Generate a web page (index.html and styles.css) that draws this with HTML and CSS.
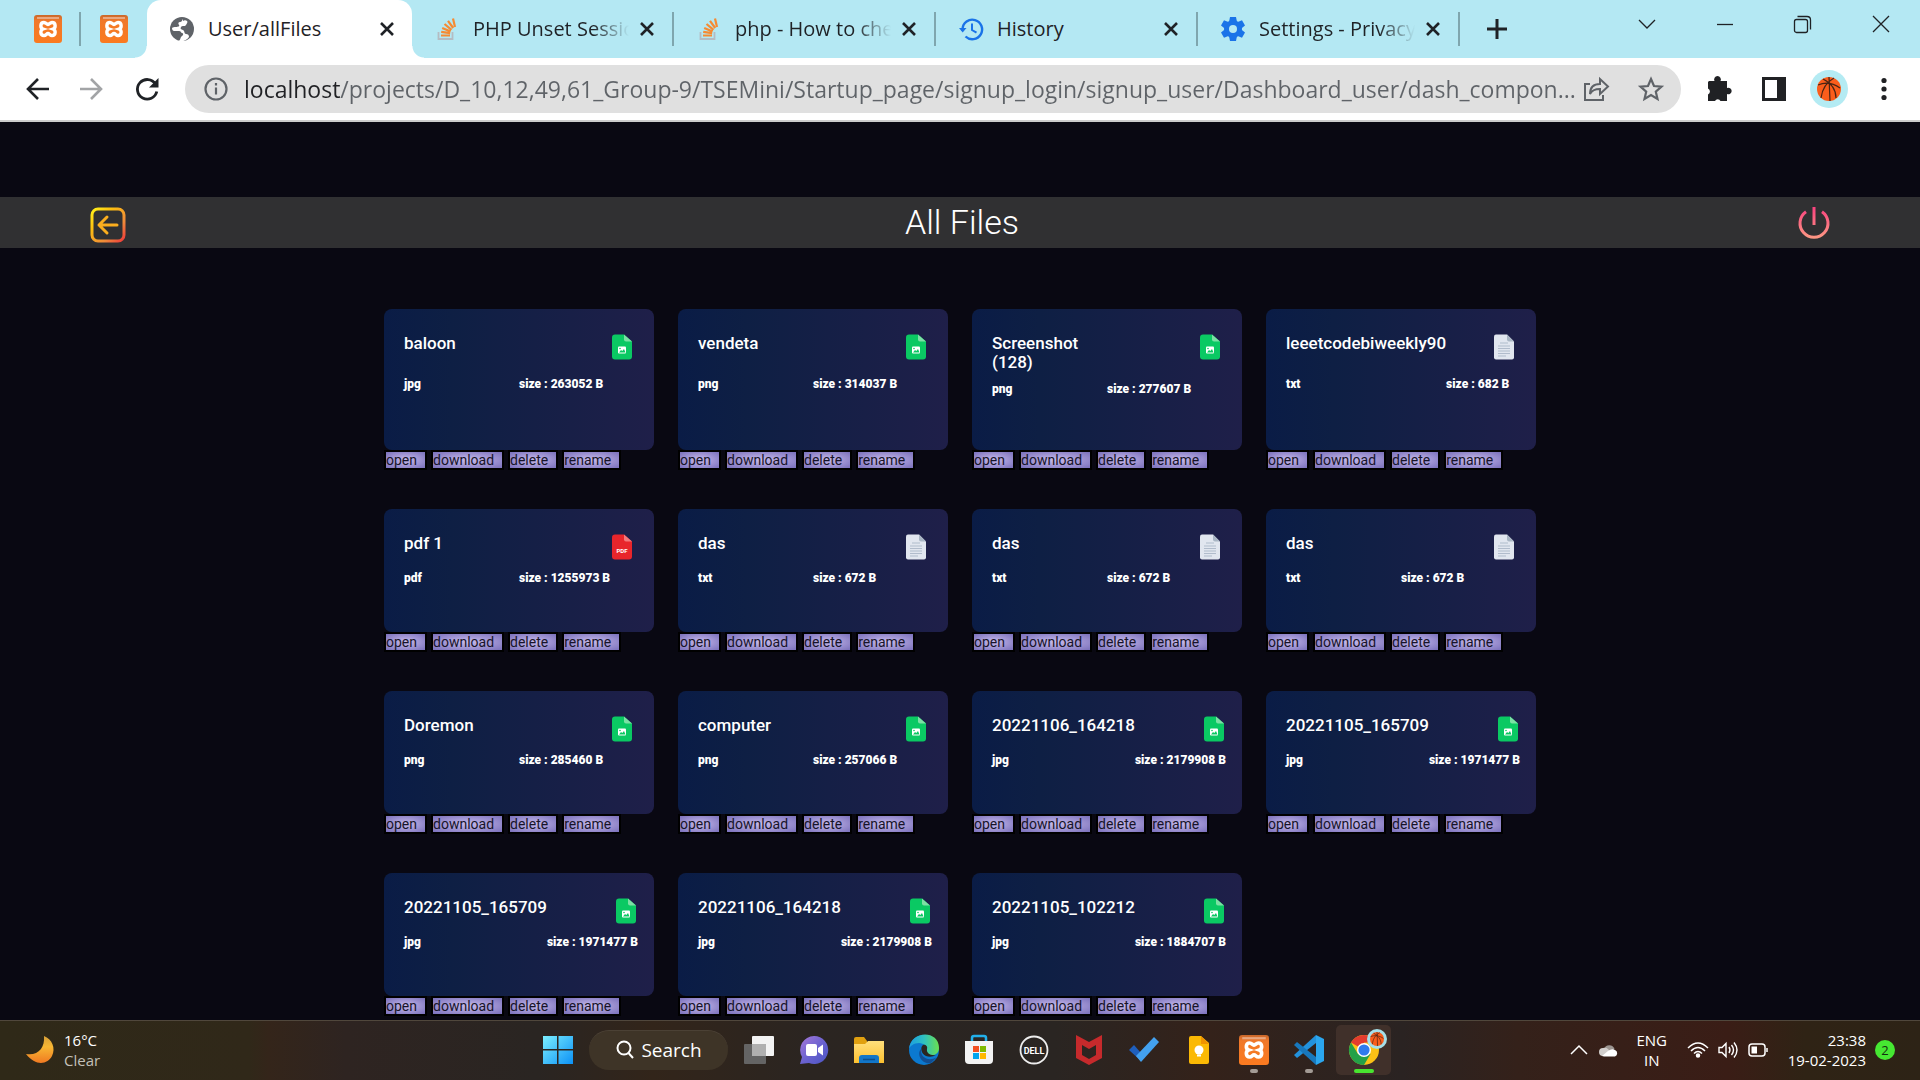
FILE: index.html
```html
<!DOCTYPE html>
<html lang="en">
<head>
<meta charset="utf-8">
<title>User/allFiles</title>
<link rel="stylesheet" href="styles.css">
</head>
<body>
<svg class="defs" aria-hidden="true">
  <defs>
    <linearGradient id="g-xampp" x1="0" y1="0" x2="0" y2="1"><stop offset="0" stop-color="#c9682c"/><stop offset=".2" stop-color="#f0782a"/><stop offset="1" stop-color="#fb7a20"/></linearGradient>
    <linearGradient id="g-back" x1="0" y1="0" x2="1" y2="1"><stop offset="0" stop-color="#fff11a"/><stop offset=".3" stop-color="#fdbf10"/><stop offset=".7" stop-color="#f08a3a"/><stop offset="1" stop-color="#ee3a3a"/></linearGradient>
    <linearGradient id="g-power" gradientUnits="userSpaceOnUse" x1="0" y1="0" x2="0" y2="32"><stop offset="0" stop-color="#f9417f"/><stop offset="1" stop-color="#fd9a84"/></linearGradient>
    <linearGradient id="g-moon" x1="0" y1="0" x2="0" y2="1"><stop offset="0" stop-color="#d8a038"/><stop offset=".4" stop-color="#f7b733"/><stop offset="1" stop-color="#f07a22"/></linearGradient>
    <linearGradient id="g-win" gradientUnits="userSpaceOnUse" x1="0" y1="0" x2="30" y2="30"><stop offset="0" stop-color="#7df0ff"/><stop offset="1" stop-color="#0a8ff5"/></linearGradient>
    <linearGradient id="g-chat" x1="0" y1="0" x2="1" y2="1"><stop offset="0" stop-color="#a878d8"/><stop offset=".5" stop-color="#6c63d0"/><stop offset="1" stop-color="#4a54c4"/></linearGradient>
    <linearGradient id="g-folder" x1="0" y1="0" x2="0" y2="1"><stop offset="0" stop-color="#ffdf7c"/><stop offset="1" stop-color="#fdc130"/></linearGradient>
    <linearGradient id="g-edge" x1="0" y1="0" x2="1" y2="0"><stop offset="0" stop-color="#1b9de2"/><stop offset=".5" stop-color="#2fc1c0"/><stop offset="1" stop-color="#6be04f"/></linearGradient>
    <symbol id="i-xampp" viewBox="0 0 28 28"><rect width="28" height="28" rx="3" fill="url(#g-xampp)"/><path d="M3 3h22" stroke="#e9a881" stroke-width="2"/><path d="M10 7.500c-4 0-4 5.500-1 6.500c-3 1-3 6.500 1 6.500c2 0 2.500-2 4-2s2 2 4 2c4 0 4-5.500 1-6.500c3-1 3-6.500-1-6.500c-2 0-2.500 2-4 2s-2-2-4-2z" fill="#f57a25" stroke="#fff" stroke-width="3.400"/></symbol>
    <symbol id="i-so" viewBox="0 0 24 24"><path d="M3.500 15v7h14v-7" fill="none" stroke="#b4bcc2" stroke-width="1.800"/><g stroke="#f58b33" stroke-width="2.200"><path d="M6 18.500h9M6.200 14.800l9 1.300M7.200 11l8.400 3.600M9.500 7l7 5.800M13 3.800l5.200 7.200M18 1.500l2 8.500"/></g></symbol>
    <symbol id="i-x" viewBox="0 0 20 20"><path d="M4 4l12 12M16 4L4 16" stroke="#1f2226" stroke-width="2.600"/></symbol>
    <symbol id="i-img" viewBox="0 0 20 25"><path d="M3 0h9l8 7v15a3 3 0 0 1-3 3H3a3 3 0 0 1-3-3V3a3 3 0 0 1 3-3z" fill="#0ac963"/><path d="M12 0l8 7h-6a2 2 0 0 1-2-2z" fill="#7ce0a4"/><rect x="6" y="12" width="8" height="7" rx="1" fill="#fff"/><path d="M7 18l2-2.500 1.300 1 1.700-2 1.500 3.500z" fill="#0ac963"/><circle cx="8" cy="14" r=".8" fill="#0ac963"/></symbol>
    <symbol id="i-pdf" viewBox="0 0 20 25"><path d="M3 0h9l8 7v15a3 3 0 0 1-3 3H3a3 3 0 0 1-3-3V3a3 3 0 0 1 3-3z" fill="#e8252b"/><path d="M12 0l8 7h-6a2 2 0 0 1-2-2z" fill="#f2797c"/><text x="10" y="18.500" font-size="6" text-anchor="middle" class="glyph-text">PDF</text></symbol>
    <symbol id="i-txt" viewBox="0 0 20 25"><path d="M2 0h11l7 7v16a2 2 0 0 1-2 2H2a2 2 0 0 1-2-2V2a2 2 0 0 1 2-2z" fill="#e1e6ef"/><path d="M13 0l7 7h-5a2 2 0 0 1-2-2z" fill="#a9b6c4"/><path d="M6 8.500h8M4 11.500h12M4 14h12M4 16.500h12M4 19h12M4 21.500h8" stroke="#b0bbcb" stroke-width="1.200"/></symbol>
    <symbol id="i-ball" viewBox="0 0 24 24"><circle cx="12" cy="12" r="12" fill="#fb5d1b"/><path d="M12 0l1 24M1 8c7-3 15-2 22 3M4 21C5 13 8 6 17 1M6 2c8 4 13 11 13 19" fill="none" stroke="#4a2414" stroke-width="1.200"/></symbol>
  </defs>
</svg>

<header class="browser">
  <nav class="tabs" aria-label="Tabs">
    <a class="tab-pin" href="#" aria-label="XAMPP"><svg class="ic28"><use href="#i-xampp"/></svg></a>
    <a class="tab-pin tab-pin-last" href="#" aria-label="XAMPP"><svg class="ic28"><use href="#i-xampp"/></svg></a>
    <div class="tab tab-active">
      <svg class="ic24" viewBox="0 0 24 24"><circle cx="12" cy="12" r="12" fill="#5f6368"/><path d="M13 2c-1 1-1 3-3 3s-2 2-1 3-1 2-3 2-3 0-4 1c0 2 1 3 2 3h5c2 0 2 2 3 2s2 2 0 3-1 3-3 5c4 1 8-1 10-4 0-2-1-3-3-3s-1-3-3-4-3-1-2-3 4 0 5-2 2-3 1-4-3-1-4 0z" fill="#fff"/></svg>
      <a class="tab-name" href="#">User/allFiles</a><button class="tab-close" aria-label="Close"><svg class="ic20"><use href="#i-x"/></svg></button>
    </div>
    <div class="tab">
      <svg class="ic24"><use href="#i-so"/></svg>
      <a class="tab-name tab-fade" href="#">PHP Unset Session</a><button class="tab-close" aria-label="Close"><svg class="ic20"><use href="#i-x"/></svg></button>
    </div>
    <div class="tab">
      <svg class="ic24"><use href="#i-so"/></svg>
      <a class="tab-name tab-fade" href="#">php - How to check</a><button class="tab-close" aria-label="Close"><svg class="ic20"><use href="#i-x"/></svg></button>
    </div>
    <div class="tab">
      <svg class="ic24" viewBox="0 0 24 24" fill="none" stroke="#1a73e8" stroke-width="2.400"><path d="M3.500 14V12A9.800 9.800 0 1 1 6.500 19.500"/><path d="M0 11h7.500l-3.800 4.500z" fill="#1a73e8" stroke="none"/><path d="M13 6.500v6.500l4.500 2.700" stroke-width="2"/></svg>
      <a class="tab-name" href="#">History</a><button class="tab-close" aria-label="Close"><svg class="ic20"><use href="#i-x"/></svg></button>
    </div>
    <div class="tab">
      <svg class="ic24" viewBox="0 0 24 24"><g fill="#1a73e8"><circle cx="12" cy="12" r="9"/><path d="M9 0h6l1 5H8zM9 24h6l1-5H8zM0 8.500L3 3.300l5 2-4 6.500zM24 8.500l-3-5.200-5 2 4 6.500zM0 15.500l3 5.200 5-2-4-6.500zM24 15.500l-3 5.200-5-2 4-6.500z"/></g><circle cx="12" cy="12" r="4" fill="#b5e8f3"/></svg>
      <a class="tab-name tab-fade" href="#">Settings - Privacy and</a><button class="tab-close" aria-label="Close"><svg class="ic20"><use href="#i-x"/></svg></button>
    </div>
    <button class="tab-new" aria-label="New tab"><svg class="ic24" viewBox="0 0 24 24"><path d="M12 2v20M2 12h20" stroke="#1f2226" stroke-width="3"/></svg></button>
    <div class="window-controls">
      <button aria-label="Search tabs"><svg class="ic20" viewBox="0 0 20 20"><path d="M2 6l8 8 8-8"/></svg></button>
      <button aria-label="Minimize"><svg class="ic20" viewBox="0 0 20 20"><path d="M2 10.500h16"/></svg></button>
      <button aria-label="Restore"><svg class="ic20" viewBox="0 0 20 20"><rect x="1.500" y="5.500" width="13" height="13" rx="2"/><path d="M4.500 2.500H14q3.500 0 3.500 3.500v9.500"/></svg></button>
      <button aria-label="Close window"><svg class="ic20" viewBox="0 0 20 20"><path d="M2 2l16 16M18 2L2 18"/></svg></button>
    </div>
  </nav>
  <div class="toolbar">
    <button class="tool" aria-label="Back"><svg class="ic24" viewBox="0 0 24 24" fill="none" stroke="#1f2226" stroke-width="2.600"><path d="M24 12H3M13 2L3 12l10 10"/></svg></button>
    <button class="tool" aria-label="Forward"><svg class="ic24" viewBox="0 0 24 24" fill="none" stroke="#a2a4a6" stroke-width="2.600"><path d="M0 12h21M11 2l10 10-10 10"/></svg></button>
    <button class="tool" aria-label="Reload"><svg class="ic24" viewBox="0 0 24 24"><path d="M20.500 7A9.800 9.800 0 1 0 21.800 14.500" fill="none" stroke="#1f2226" stroke-width="2.800"/><path d="M23.500 1v9.500H14z" fill="#1f2226"/></svg></button>
    <div class="omnibox">
      <svg class="ic24" viewBox="0 0 24 24" fill="none" stroke="#5f6368" stroke-width="2.200"><circle cx="12" cy="12" r="10.500"/><path d="M12 10.500v7M12 6v2.600"/></svg>
      <input class="url" type="text" aria-label="Address" value="localhost/projects/D_10,12,49,61_Group-9/TSEMini/Startup_page/signup_login/signup_user/Dashboard_user/dash_compon...">
      <button class="omni-btn" aria-label="Share"><svg class="ic26" viewBox="0 0 26 26" fill="none" stroke="#5f6368" stroke-width="2"><path d="M7 8H2v16h18v-5"/><path d="M7 18c0-7 4-10 10-10V3l8 7.500-8 7.500v-5c-5 0-8 1-10 5z"/></svg></button>
      <button class="omni-btn omni-star" aria-label="Bookmark"><svg class="ic26" viewBox="0 0 26 26" fill="none" stroke="#5f6368" stroke-width="2.200"><path d="M13 3l3 7 7.500.7-5.700 5 1.700 7.300-6.500-3.900L6.500 23l1.700-7.300-5.700-5L10 10z"/></svg></button>
    </div>
    <button class="tool" aria-label="Extensions"><svg class="ic26" viewBox="0 0 26 26" fill="#202124"><path d="M3 5h5.500a3.400 3.400 0 1 1 6 0H21v7a3.300 3.300 0 1 1 0 6v7h-6.500a3 3 0 0 0-5.500 0H2v-6.500a3.300 3.300 0 0 0 0-6V6z"/></svg></button>
    <button class="tool" aria-label="Side panel"><svg class="ic24" viewBox="0 0 24 24"><path d="M1.500 1.500h21v21h-21z" fill="#fff" stroke="#202124" stroke-width="3"/><path d="M15 1h8v22h-8z" fill="#202124"/></svg></button>
    <button class="tool" aria-label="Profile"><span class="avatar"><svg class="ic24"><use href="#i-ball"/></svg></span></button>
    <button class="tool" aria-label="Menu"><svg class="ic24" viewBox="0 0 24 24" fill="#202124"><circle cx="12" cy="3.500" r="2.600"/><circle cx="12" cy="12" r="2.600"/><circle cx="12" cy="20.500" r="2.600"/></svg></button>
  </div>
</header>

<main class="page">
  <div class="page-bar">
    <a class="bar-back" href="#" aria-label="Back"><svg class="ic36" viewBox="0 0 36 36" fill="none" stroke="url(#g-back)" stroke-width="3"><rect x="2" y="2" width="32" height="32" rx="6"/><path d="M27 18H9M17 10l-8 8 8 8" stroke="#fbae1e" stroke-linecap="round" stroke-linejoin="round"/></svg></a>
    <h1>All Files</h1>
    <a href="#" aria-label="Log out"><svg class="ic32" viewBox="0 0 32 32" fill="none" stroke="url(#g-power)" stroke-width="3"><path d="M16 0l.01 18M8 4.800a14 14 0 1 0 16 0"/></svg></a>
  </div>

  <section class="files">
    <article class="file file-tall"><div class="card"><h2 class="name">baloon</h2><svg class="kind"><use href="#i-img"/></svg><span>jpg</span><span>size : 263052 B</span></div><div class="actions"><a href="#">open</a><a href="#">download</a><a href="#">delete</a><a href="#">rename</a></div></article>
    <article class="file file-tall"><div class="card"><h2 class="name">vendeta</h2><svg class="kind"><use href="#i-img"/></svg><span>png</span><span>size : 314037 B</span></div><div class="actions"><a href="#">open</a><a href="#">download</a><a href="#">delete</a><a href="#">rename</a></div></article>
    <article class="file file-tall"><div class="card"><h2 class="name">Screenshot (128)</h2><svg class="kind"><use href="#i-img"/></svg><span>png</span><span>size : 277607 B</span></div><div class="actions"><a href="#">open</a><a href="#">download</a><a href="#">delete</a><a href="#">rename</a></div></article>
    <article class="file file-tall"><div class="card"><h2 class="name">leeetcodebiweekly90</h2><svg class="kind"><use href="#i-txt"/></svg><span>txt</span><span>size : 682 B</span></div><div class="actions"><a href="#">open</a><a href="#">download</a><a href="#">delete</a><a href="#">rename</a></div></article>
    <article class="file"><div class="card"><h2 class="name">pdf 1</h2><svg class="kind"><use href="#i-pdf"/></svg><span>pdf</span><span>size : 1255973 B</span></div><div class="actions"><a href="#">open</a><a href="#">download</a><a href="#">delete</a><a href="#">rename</a></div></article>
    <article class="file"><div class="card"><h2 class="name">das</h2><svg class="kind"><use href="#i-txt"/></svg><span>txt</span><span>size : 672 B</span></div><div class="actions"><a href="#">open</a><a href="#">download</a><a href="#">delete</a><a href="#">rename</a></div></article>
    <article class="file"><div class="card"><h2 class="name">das</h2><svg class="kind"><use href="#i-txt"/></svg><span>txt</span><span>size : 672 B</span></div><div class="actions"><a href="#">open</a><a href="#">download</a><a href="#">delete</a><a href="#">rename</a></div></article>
    <article class="file"><div class="card"><h2 class="name">das</h2><svg class="kind"><use href="#i-txt"/></svg><span>txt</span><span>size : 672 B</span></div><div class="actions"><a href="#">open</a><a href="#">download</a><a href="#">delete</a><a href="#">rename</a></div></article>
    <article class="file"><div class="card"><h2 class="name">Doremon</h2><svg class="kind"><use href="#i-img"/></svg><span>png</span><span>size : 285460 B</span></div><div class="actions"><a href="#">open</a><a href="#">download</a><a href="#">delete</a><a href="#">rename</a></div></article>
    <article class="file"><div class="card"><h2 class="name">computer</h2><svg class="kind"><use href="#i-img"/></svg><span>png</span><span>size : 257066 B</span></div><div class="actions"><a href="#">open</a><a href="#">download</a><a href="#">delete</a><a href="#">rename</a></div></article>
    <article class="file"><div class="card"><h2 class="name">20221106_164218</h2><svg class="kind"><use href="#i-img"/></svg><span>jpg</span><span>size : 2179908 B</span></div><div class="actions"><a href="#">open</a><a href="#">download</a><a href="#">delete</a><a href="#">rename</a></div></article>
    <article class="file"><div class="card"><h2 class="name">20221105_165709</h2><svg class="kind"><use href="#i-img"/></svg><span>jpg</span><span>size : 1971477 B</span></div><div class="actions"><a href="#">open</a><a href="#">download</a><a href="#">delete</a><a href="#">rename</a></div></article>
    <article class="file"><div class="card"><h2 class="name">20221105_165709</h2><svg class="kind"><use href="#i-img"/></svg><span>jpg</span><span>size : 1971477 B</span></div><div class="actions"><a href="#">open</a><a href="#">download</a><a href="#">delete</a><a href="#">rename</a></div></article>
    <article class="file"><div class="card"><h2 class="name">20221106_164218</h2><svg class="kind"><use href="#i-img"/></svg><span>jpg</span><span>size : 2179908 B</span></div><div class="actions"><a href="#">open</a><a href="#">download</a><a href="#">delete</a><a href="#">rename</a></div></article>
    <article class="file"><div class="card"><h2 class="name">20221105_102212</h2><svg class="kind"><use href="#i-img"/></svg><span>jpg</span><span>size : 1884707 B</span></div><div class="actions"><a href="#">open</a><a href="#">download</a><a href="#">delete</a><a href="#">rename</a></div></article>
  </section>
</main>

<footer class="taskbar">
  <div class="weather">
    <svg class="ic28" viewBox="0 0 28 28"><path d="M18 0C26 3 30 12 26 20S10 31 0 18c12 2 19-6 18-18z" fill="url(#g-moon)"/></svg>
    <p>16°C<br><span class="muted">Clear</span></p>
  </div>
  <div class="apps">
    <button class="app" aria-label="Start"><svg class="ic30" viewBox="0 0 30 30" fill="url(#g-win)"><path d="M0 1h14v13H0zM15.500 1H30v13H15.500zM0 15.500h14V29H0zM15.500 15.500H30V29H15.500z"/></svg></button>
    <button class="search"><svg class="ic20" viewBox="0 0 20 20" fill="none" stroke="#fff" stroke-width="2"><circle cx="9" cy="8" r="6.500"/><path d="M13.500 13l4.500 5"/></svg>Search</button>
    <button class="app" aria-label="Task view"><svg class="ic30" viewBox="0 0 30 30"><rect y="9" width="22" height="20" rx="1" fill="#646464"/><rect x="8" y="1" width="22" height="20" rx="1" fill="#f3f3f3"/><path d="M8 9h14v12H8z" fill="#b0b0b0"/></svg></button>
    <button class="app" aria-label="Chat"><svg class="ic30" viewBox="0 0 30 30"><path d="M15 1a14 14 0 1 1-5 27L1 29l2-7A14 14 0 0 1 15 1z" fill="url(#g-chat)"/><rect x="7" y="9" width="11" height="12" rx="2" fill="#fff"/><path d="M19 13l5-3.500v11L19 17z" fill="#fff"/></svg></button>
    <button class="app" aria-label="File Explorer"><svg class="ic30" viewBox="0 0 30 30"><path d="M0 4a2 2 0 0 1 2-2h8l3 4v6H0z" fill="#e0a010"/><path d="M0 9h11l3-3h16v22H0z" fill="url(#g-folder)"/><path d="M5 28v-5a3 3 0 0 1 3-3h14a3 3 0 0 1 3 3v5z" fill="#1276c8"/><path d="M9 24.500h12" stroke="#0b4f8e" stroke-width="1.500"/></svg></button>
    <button class="app" aria-label="Edge"><svg class="ic30" viewBox="0 0 30 30"><circle cx="15" cy="15" r="15" fill="#0b79cf"/><path d="M0 14C2-5 30-5 30 13c0 5-4 8-9 7s-3-4-3-6-3-6-8-6-9 3-10 6z" fill="url(#g-edge)"/><path d="M12 14c-5 5 1 16 10 14l6-6c-8 5-17 1-16-8z" fill="#124e93"/><path d="M18 14c1-3-2-5-4-4-3 2-2 9 3 11 3 1 7 1 10-1-5 1-10-2-9-6z" fill="#2b2521"/></svg></button>
    <button class="app" aria-label="Store"><svg class="ic30" viewBox="0 0 30 30"><path d="M8 8V3q0-2 2-2h10q2 0 2 2v5" fill="none" stroke="#22b0ea" stroke-width="2.500"/><path d="M1 6h28v19a4 4 0 0 1-4 4H5a4 4 0 0 1-4-4z" fill="#f3f3f3"/><path d="M9 11h6v6H9z" fill="#f25022"/><path d="M16 11h6v6h-6z" fill="#7fba00"/><path d="M9 18h6v6H9z" fill="#00a4ef"/><path d="M16 18h6v6h-6z" fill="#ffb900"/></svg></button>
    <button class="app" aria-label="Dell"><svg class="ic30" viewBox="0 0 30 30"><circle cx="15" cy="15" r="13.500" fill="none" stroke="#eee" stroke-width="1.800"/><text x="15" y="18.500" font-size="9" text-anchor="middle" class="glyph-text">DELL</text></svg></button>
    <button class="app" aria-label="McAfee"><svg class="ic30" viewBox="0 0 30 30"><path d="M2 0l13 7 13-7v23l-13 7-13-7zM8 10v10l7 4 7-4V10l-7 4z" fill="#c62a2c" fill-rule="evenodd"/></svg></button>
    <button class="app" aria-label="To Do"><svg class="ic30" viewBox="0 0 30 30"><path d="M0 15l5-5 7 8v8z" fill="#1f5fbd"/><path d="M7 21L25 2l5 5-18 20z" fill="#43a1ef"/></svg></button>
    <button class="app" aria-label="Keep"><svg class="ic30" viewBox="0 0 30 30"><path d="M7 1h10l8 7v19a2 2 0 0 1-2 2H7a2 2 0 0 1-2-2V3a2 2 0 0 1 2-2z" fill="#fbb904"/><path d="M17 1l8 8h-8z" fill="#f09300"/><circle cx="15" cy="15" r="4.500" fill="#fff"/><path d="M13 20.500h4" stroke="#fff" stroke-width="2"/></svg></button>
    <button class="app app-open" aria-label="XAMPP"><svg class="ic30"><use href="#i-xampp"/></svg></button>
    <button class="app app-open" aria-label="Visual Studio Code"><svg class="ic30" viewBox="0 0 30 30"><path d="M22 8L3 23l-3-3 22-20z" fill="#2392dc"/><path d="M22 22L3 7l-3 3 22 20z" fill="#1878bd"/><path d="M22 0l8 4v22l-8 4z" fill="#2ba6ee"/></svg></button>
    <button class="app app-open app-current" aria-label="Chrome"><svg class="ic30" viewBox="0 0 30 30"><circle cx="15" cy="15" r="15" fill="#fbc116"/><path d="M15 15L2 7.500A15 15 0 0 1 28 7.500H15z" fill="#e33b2e"/><path d="M2 7.500A15 15 0 0 0 15 30l6.500-11L9 19z" fill="#24a148"/><circle cx="15" cy="15" r="7" fill="#fff"/><circle cx="15" cy="15" r="5.600" fill="#2f7bee"/></svg><span class="profile-badge"><svg class="ic14"><use href="#i-ball"/></svg></span></button>
  </div>
  <div class="tray">
    <svg class="ic16" viewBox="0 0 16 16" fill="none" stroke="#fff" stroke-width="1.500"><path d="M0 12l8-8 8 8"/></svg>
    <svg class="ic20" viewBox="0 0 20 20"><path d="M5 9a5.500 5.500 0 0 1 10.500 0L10 14z" fill="#9c9692"/><path d="M4 16a4 4 0 0 1 0-8q3-1 5 1l6 7z" fill="#d2cfcd"/><path d="M3 16l6-5q4-3 7-1a3.500 3.500 0 0 1 0 6.500H5z" fill="#fff"/></svg>
    <p class="lang">ENG<br>IN</p>
    <div class="status">
      <svg class="ic20" viewBox="0 0 20 20" fill="none" stroke="#fff" stroke-width="1.500"><path d="M0 8q10-10 20 0M3 11q7-7 14 0M6 13.500q4-4 8 0"/><circle cx="10" cy="15.500" r="1.500" fill="#fff"/></svg>
      <svg class="ic20" viewBox="0 0 20 20" fill="none" stroke="#fff" stroke-width="1.400"><path d="M1 7.500h3l4-4v13l-4-4H1zM11 7q2 3 0 6M13.500 5q4 5 0 10M16 2.500q6 7.500 0 15"/></svg>
      <svg class="ic20" viewBox="0 0 20 20" fill="none" stroke="#fff" stroke-width="1.500"><rect x="1" y="4" width="16" height="12" rx="3"/><path d="M19 8v4"/><path d="M3.500 6.500H9v7H3.500z" fill="#fff" stroke="none"/></svg>
    </div>
    <p class="clock">23:38<br>19-02-2023</p>
    <span class="count">2</span>
  </div>
</footer>
</body>
</html>
```
FILE: styles.css
```css
* { box-sizing: border-box; margin: 0; }
body { display: flex; flex-direction: column; height: 100vh; background: #090812; font-family: "Open Sans", "Noto Sans", sans-serif; }
a { color: inherit; text-decoration: none; }
button { padding: 0; border: 0; background: none; color: inherit; font: inherit; display: flex; align-items: center; justify-content: center; }
svg { display: block; flex: none; overflow: visible; }
.defs { position: absolute; width: 0; height: 0; }
.glyph-text { font-family: Roboto, sans-serif; font-weight: 700; fill: #fff; }
.ic14 { width: 14px; height: 14px; }
.ic16 { width: 16px; height: 16px; }
.ic20 { width: 20px; height: 20px; }
.ic24 { width: 24px; height: 24px; }
.ic26 { width: 26px; height: 26px; }
.ic28 { width: 28px; height: 28px; }
.ic30 { width: 30px; height: 30px; }
.ic32 { width: 32px; height: 32px; }
.ic36 { width: 36px; height: 36px; }

/* browser chrome */
.browser { flex: none; background: #fff; border-bottom: 2px solid #ccc; }
.tabs { display: flex; align-items: center; height: 58px; padding-left: 16px; background: #b4e8f3; color: #1f2226; }
.tab-pin { display: flex; align-items: center; justify-content: center; width: 65px; height: 34px; border-right: 2px solid #7fa6ae; }
.tab-pin-last { border-right: 0; width: 66px; }
.tab { display: flex; align-items: center; width: 262px; height: 34px; padding: 0 15px 0 23px; border-right: 2px solid #7fa6ae; }
.tab-active { position: relative; width: 265px; height: 58px; border: 0; background: #fff; border-radius: 14px 14px 0 0; }
.tab-active::before, .tab-active::after { content: ""; position: absolute; bottom: 0; width: 12px; height: 12px; }
.tab-active::before { right: 100%; background: radial-gradient(circle at 0 0, #b4e8f3 11px, #fff 12px); }
.tab-active::after { left: 100%; background: radial-gradient(circle at 100% 0, #b4e8f3 11px, #fff 12px); }
.tab-name { flex: 1; min-width: 0; margin: 0 8px 0 14px; overflow: hidden; white-space: nowrap; font-size: 20px; line-height: 32px; }
.tab-fade { mask-image: linear-gradient(to left, transparent, #000 36px); }
.tab-close { width: 20px; height: 20px; }
.tab-new { width: 74px; height: 34px; }
.window-controls { display: flex; margin-left: auto; align-self: stretch; padding-bottom: 10px; }
.window-controls button { width: 78px; }
.window-controls svg { fill: none; stroke: #1f2226; stroke-width: 1.3; }
.toolbar { display: flex; align-items: center; height: 62px; padding: 0 9px; }
.tool { flex: none; width: 55px; height: 48px; }
.omnibox { display: flex; flex: 1; align-items: center; height: 48px; margin: 0 10px 0 11px; padding: 0 10px 0 19px; border-radius: 24px; background: #e0e0e0; }
.url { flex: 1; min-width: 0; height: 40px; margin-left: 16px; padding: 0; border: 0; outline: 0; font-family: inherit; font-size: 23px; color: transparent; background: linear-gradient(to right, #202124 96px, #5f6368 96px); -webkit-background-clip: text; background-clip: text; }
.omni-btn { width: 40px; height: 48px; }
.omni-star { margin-left: 15px; }
.avatar { display: flex; align-items: center; justify-content: center; width: 38px; height: 38px; border-radius: 50%; background: #b4ebf3; }

/* file page */
.page { flex: 1; min-height: 0; overflow: auto; scrollbar-width: none; padding-top: 75px; font-family: Roboto, sans-serif; color: #fff; }
.page-bar { display: flex; align-items: center; justify-content: space-between; height: 51px; padding: 0 90px; background: #303032; }
.bar-back { padding-top: 4px; }
h1 { font-size: 34px; font-weight: 300; line-height: 51px; }
.files { display: grid; grid-template-columns: repeat(4, minmax(0, 1fr)); gap: 39px 24px; width: 60%; margin: 61px auto 0; }
.card { display: grid; grid-template-columns: 1fr 1fr; grid-template-rows: auto 14px; align-content: start; height: 123px; padding: 25px 20px 0; border-radius: 8px; background: linear-gradient(to right, #0a1c46, #0e1f44 25%, #1f1f49); font-size: 12px; font-weight: 900; line-height: 14px; }
.card span { white-space: nowrap; }
.name { min-height: 37px; padding-bottom: 10px; font-size: 17px; font-weight: 500; line-height: 19px; }
.file-tall .card { height: 141px; }
.file-tall .name { min-height: 43px; }
.kind { width: 20px; height: 26px; margin-right: 2px; justify-self: end; }
.actions { display: flex; gap: 4px; height: 20px; color: #17142a; font-size: 14px; line-height: 16px; }
.actions a { padding-right: 8px; border: 2px solid #000; background: radial-gradient(#c8bbec, #7a70bb); }

/* taskbar */
.taskbar { display: flex; flex: none; align-items: center; height: 60px; padding-bottom: 2px; border-top: 1px solid #50473c; background: linear-gradient(to right, #2f2918, #302819 13%, #34251a 14%, #2e2421 18%, #2a2522 28%, #32251a 34%, #2b2521 42%, #2a2522 55%, #34221a 63%, #2a2322 73%, #34211a 79%, #3a1d16 90%, #2f2315 94%, #2d2316); color: #fff; font-size: 15px; line-height: 20px; }
.weather { display: flex; flex: 1; gap: 10px; align-items: center; padding-left: 26px; }
.muted { color: #c4c0b8; }
.apps { display: flex; align-items: center; }
.app { position: relative; width: 55px; height: 50px; }
.search { gap: 6px; width: 139px; height: 40px; margin: 0 3px 0 4px; border-radius: 20px; background: #3e3427; border-top: 1px solid #4b4135; font-size: 19px; }
.app-open::after { content: ""; position: absolute; bottom: 2px; left: 24px; width: 8px; height: 4px; border-radius: 2px; background: #a39b95; }
.app-current { border-radius: 5px; background: #40302a; }
.app-current::after { left: 18px; width: 20px; background: #48e430; }
.profile-badge { position: absolute; top: 4px; right: 4px; padding: 3px; border-radius: 50%; background: #a5dfe8; }
.tray { display: flex; flex: 1; align-items: center; justify-content: flex-end; padding-right: 25px; }
.tray > .ic20 { margin-left: 12px; }
.lang { width: 32px; margin: 0 20px 0 17px; text-align: center; }
.status { display: flex; gap: 10px; margin-right: 20px; }
.clock { text-align: right; }
.count { width: 20px; height: 20px; margin-left: 9px; border-radius: 50%; background: #46e832; color: #143010; font-size: 13px; text-align: center; }
```
